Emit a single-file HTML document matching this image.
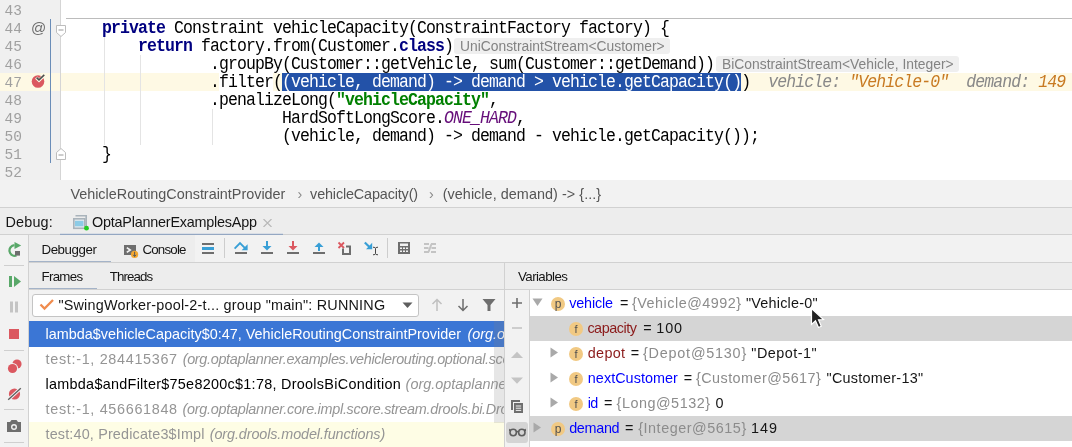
<!DOCTYPE html>
<html><head><meta charset="utf-8">
<style>
*{margin:0;padding:0;box-sizing:border-box}
html,body{width:1072px;height:447px;overflow:hidden;background:#f2f2f2}
body{position:relative;font-family:"Liberation Sans",sans-serif;color:#000;will-change:transform}
.a{position:absolute}
.mono{font-family:"Liberation Mono",monospace}
.code{position:absolute;left:66px;transform:translateY(1px) scaleY(1.1);transform-origin:0 13px;white-space:pre;font-family:"Liberation Mono",monospace;font-size:16.5px;letter-spacing:-0.9px;line-height:18px;height:18px;color:#000}
.kw{color:#000080;font-weight:bold}
.str{color:#008000;font-weight:bold}
.const{color:#660e7a;font-style:italic}
.ln{position:absolute;left:0;width:22px;text-align:right;font-family:"Liberation Mono",monospace;font-size:14.5px;line-height:18px;color:#a0a0a0}
.hint{position:absolute;height:16px;background:#efefef;border-radius:3px;color:#838383;font-size:13.85px;line-height:16px;padding-left:6px;white-space:pre}
.ui{position:absolute;white-space:pre;font-size:14px;line-height:18px}
.tab{position:absolute;white-space:pre;font-size:12.5px;line-height:16px;color:#1f1f1f}
.hl{position:absolute;height:1px;background:#d1d1d1}
.vl{position:absolute;width:1px;background:#d1d1d1}
</style></head><body>

<!-- ============ EDITOR ============ -->
<div class="a" style="left:0;top:0;width:1072px;height:180px;background:#fff"></div>
<div class="a" style="left:0;top:0;width:60px;height:180px;background:#f0f0f0"></div>
<!-- current line highlight -->
<div class="a" style="left:0;top:73px;width:1072px;height:18px;background:#fef9e4"></div>
<div class="a" style="left:219px;top:73px;width:54px;height:18px;background:#fff"></div>
<div class="a" style="left:282px;top:73px;width:459px;height:18px;background:#2352a8"></div>
<!-- gutter border -->
<div class="a" style="left:60px;top:0;width:1px;height:180px;background:#d5d5d5"></div>
<!-- vcs marker -->
<div class="a" style="left:50px;top:19px;width:1px;height:144px;background:#6a8db8"></div>
<!-- method separator -->
<div class="a" style="left:66px;top:18px;width:1006px;height:1px;background:#bcbcbc"></div>
<!-- indent guides -->
<div class="a" style="left:104px;top:37px;width:1px;height:108px;background:#e4e4e4"></div>
<div class="a" style="left:140px;top:55px;width:1px;height:90px;background:#e4e4e4"></div>
<div class="a" style="left:212px;top:109px;width:1px;height:36px;background:#e4e4e4"></div>

<!-- line numbers -->
<div class="ln" style="top:2px">43</div>
<div class="ln" style="top:20px">44</div>
<div class="ln" style="top:38px">45</div>
<div class="ln" style="top:56px">46</div>
<div class="ln" style="top:74px">47</div>
<div class="ln" style="top:92px">48</div>
<div class="ln" style="top:110px">49</div>
<div class="ln" style="top:128px">50</div>
<div class="ln" style="top:146px">51</div>
<div class="ln" style="top:164px">52</div>

<!-- @ icon -->
<div class="a" style="left:31px;top:19px;font-size:15px;line-height:18px;color:#6e6e6e;font-family:'Liberation Sans',sans-serif">@</div>
<!-- breakpoint -->
<svg class="a" style="left:30px;top:73px" width="16" height="18" viewBox="0 0 16 18">
  <circle cx="8" cy="8.5" r="6.3" fill="#db5860"/>
  <path d="M6.2 4.6 L9 7.3 L14.6 1.8" stroke="#fdf9e6" stroke-width="3.2" fill="none"/>
  <path d="M6.6 4.6 L9 6.9 L14.3 1.9" stroke="#4d4d4d" stroke-width="1.5" fill="none"/>
</svg>
<!-- fold markers -->
<svg class="a" style="left:55px;top:24px" width="12" height="14" viewBox="0 0 12 14">
  <path d="M1.5 1.5 H10.5 V8.5 L6 12.5 L1.5 8.5 Z" fill="#fff" stroke="#bdbdbd" stroke-width="1"/>
  <path d="M3.5 6 H8.5" stroke="#9a9a9a" stroke-width="1"/>
</svg>
<svg class="a" style="left:55px;top:147px" width="12" height="14" viewBox="0 0 12 14">
  <path d="M1.5 12.5 H10.5 V5.5 L6 1.5 L1.5 5.5 Z" fill="#fff" stroke="#bdbdbd" stroke-width="1"/>
  <path d="M3.5 8 H8.5" stroke="#9a9a9a" stroke-width="1"/>
</svg>

<!-- code -->
<div class="code" style="top:19px">    <span class="kw">private</span> Constraint vehicleCapacity(ConstraintFactory factory) {</div>
<div class="code" style="top:37px">        <span class="kw">return</span> factory.from(Customer.<span class="kw">class</span>)</div>
<div class="hint" style="left:454px;top:38px;width:216px">UniConstraintStream&lt;Customer&gt;</div>
<div class="code" style="top:55px">                .groupBy(Customer::getVehicle, sum(Customer::getDemand))</div>
<div class="hint" style="left:716px;top:56px;width:243px">BiConstraintStream&lt;Vehicle, Integer&gt;</div>
<div class="code" style="top:73px">                .filter(<span style="color:#fff">(vehicle, demand) -&gt; demand &gt; vehicle.getCapacity()</span>)  <i style="color:#888">vehicle: </i><i style="color:#c87a22">"Vehicle-0"</i><i style="color:#888">  demand: </i><i style="color:#c87a22">149</i></div>
<div class="code" style="top:91px">                .penalizeLong(<span class="str">"vehicleCapacity"</span>,</div>
<div class="code" style="top:109px">                        HardSoftLongScore.<span class="const">ONE_HARD</span>,</div>
<div class="code" style="top:127px">                        (vehicle, demand) -&gt; demand - vehicle.getCapacity());</div>
<div class="code" style="top:145px">    }</div>

<!-- ============ BREADCRUMBS ============ -->
<div class="a" style="left:0;top:180px;width:1072px;height:27px;background:#f2f2f2"></div>
<div class="hl" style="left:0;top:207px;width:1072px"></div>

<!-- ============ DEBUG BAR ============ -->
<div class="a" style="left:0;top:208px;width:1072px;height:26px;background:#ededed"></div>
<svg class="a" style="left:72px;top:214px" width="18" height="18" viewBox="0 0 18 18">
  <path d="M3.5 1.8 H14.2 V12" stroke="#a9b3bb" stroke-width="1.6" fill="none"/>
  <rect x="1.8" y="4.8" width="11" height="9.5" fill="#e6ebee" stroke="#a9b3bb" stroke-width="1.6"/>
  <rect x="3" y="6.8" width="8.5" height="5.5" fill="#8ccbe6"/>
  <circle cx="14.5" cy="14.2" r="2.4" fill="#22cc22"/>
</svg>
<svg class="a" style="left:263px;top:219px" width="9" height="8" viewBox="0 0 9 8"><path d="M0.5 0 L8.5 8 M8.5 0 L0.5 8" stroke="#b8b8b8" stroke-width="1.2"/></svg>
<div class="hl" style="left:0;top:234px;width:1072px"></div>
<div class="a" style="left:60px;top:234px;width:223px;height:1px;background:#94a7c2"></div>
<div class="a" style="left:60px;top:233px;width:223px;height:1px;background:#d9dee6"></div>

<!-- ============ LEFT TOOLBAR ============ -->
<div class="vl" style="left:28px;top:235px;height:212px"></div>
<div class="hl" style="left:4px;top:265px;width:20px;background:#cfcfcf"></div>
<div class="hl" style="left:4px;top:350px;width:20px;background:#cfcfcf"></div>
<div class="hl" style="left:4px;top:409px;width:20px;background:#cfcfcf"></div>
<div class="hl" style="left:4px;top:442px;width:20px;background:#cfcfcf"></div>
<!-- rerun -->
<svg class="a" style="left:6px;top:241px" width="17" height="17" viewBox="0 0 17 17">
  <path d="M8.5 4.2 A5.3 5.3 0 1 0 10.5 14.5" stroke="#59a869" stroke-width="2.2" fill="none"/>
  <path d="M8.5 1 L15.2 4.5 L8.5 8 Z" fill="#59a869"/>
  <rect x="9" y="10" width="5" height="4.6" fill="#6e6e6e"/>
</svg>
<!-- resume -->
<svg class="a" style="left:8px;top:275px" width="14" height="13" viewBox="0 0 14 13">
  <rect x="1" y="1" width="3" height="11" fill="#59a869"/>
  <path d="M6 1 L13 6.5 L6 12 Z" fill="#59a869"/>
</svg>
<!-- pause -->
<svg class="a" style="left:8px;top:301px" width="12" height="13" viewBox="0 0 12 13">
  <rect x="2" y="0.5" width="3" height="11" fill="#c4c4c4"/>
  <rect x="7" y="0.5" width="3" height="11" fill="#c4c4c4"/>
</svg>
<!-- stop -->
<div class="a" style="left:9px;top:329px;width:10px;height:10px;background:#db5860"></div>
<!-- view breakpoints -->
<svg class="a" style="left:6px;top:358px" width="17" height="17" viewBox="0 0 17 17">
  <circle cx="11" cy="6" r="4.6" fill="#db5860"/>
  <circle cx="6.5" cy="10.5" r="5.6" fill="#f2f2f2"/>
  <circle cx="6.5" cy="10.5" r="4.6" fill="#db5860"/>
</svg>
<!-- mute breakpoints -->
<svg class="a" style="left:6px;top:386px" width="17" height="16" viewBox="0 0 17 16">
  <circle cx="8.5" cy="8" r="5.6" fill="#db5860"/>
  <path d="M2 14 L15 2" stroke="#f2f2f2" stroke-width="3.2"/>
  <path d="M2.2 13.8 L14.8 2.2" stroke="#5e5e5e" stroke-width="1.3"/>
</svg>
<!-- camera -->
<svg class="a" style="left:6px;top:419px" width="16" height="14" viewBox="0 0 16 14">
  <path d="M1 3 H4 L5.5 1 H10.5 L12 3 H15 V13 H1 Z" fill="#6e6e6e"/>
  <circle cx="8" cy="8" r="3" fill="#f2f2f2"/>
  <circle cx="8" cy="8" r="1.6" fill="#6e6e6e"/>
</svg>

<!-- ============ DEBUGGER TABS ROW ============ -->
<div class="a" style="left:29px;top:235px;width:166px;height:27px;background:#ededed"></div>
<div class="a" style="left:29px;top:263px;width:1043px;height:26px;background:#ededed"></div>
<div class="a" style="left:29px;top:261px;width:82px;height:2px;background:#a4b3c8"></div>
<svg class="a" style="left:123px;top:242px" width="17" height="17" viewBox="0 0 17 17">
  <rect x="1" y="3" width="12" height="10" fill="#6e6e6e"/>
  <path d="M3.8 5.6 L7.2 8 L3.8 10.4" stroke="#f2f2f2" stroke-width="1.7" fill="none"/>
  <circle cx="11.6" cy="12.4" r="3.6" fill="#f4a831"/>
  <path d="M11.6 9.8 V14.4 M10.1 12.8 L11.6 14.5 L13.1 12.8" stroke="#5a5a5a" stroke-width="1" fill="none"/>
</svg>
<!-- show execution point -->
<svg class="a" style="left:202px;top:242px" width="13" height="13" viewBox="0 0 13 13">
  <rect x="0" y="1" width="12" height="2" fill="#6e6e6e"/>
  <rect x="0" y="5" width="12" height="3" fill="#389fd6"/>
  <rect x="0" y="10" width="12" height="2" fill="#6e6e6e"/>
</svg>
<div class="vl" style="left:224px;top:238px;height:20px;background:#cdcdcd"></div>
<!-- step over -->
<svg class="a" style="left:233px;top:240px" width="16" height="15" viewBox="0 0 16 15">
  <path d="M1.6 8.6 L7 3.2 L12 8.2" stroke="#389fd6" stroke-width="1.9" fill="none"/>
  <path d="M14.6 4.2 L14.6 10.2 L8.6 10.2 Z" fill="#389fd6"/>
  <rect x="2" y="12" width="12" height="2" fill="#6e6e6e"/>
</svg>
<!-- step into -->
<svg class="a" style="left:260px;top:240px" width="15" height="15" viewBox="0 0 15 15">
  <rect x="6" y="1" width="2" height="6" fill="#389fd6"/>
  <path d="M2.5 6 H11.5 L7 10.5 Z" fill="#389fd6"/>
  <rect x="1" y="12" width="12" height="2" fill="#6e6e6e"/>
</svg>
<!-- force step into -->
<svg class="a" style="left:286px;top:240px" width="15" height="15" viewBox="0 0 15 15">
  <rect x="6" y="1" width="2" height="6" fill="#db5860"/>
  <path d="M2.5 6 H11.5 L7 10.5 Z" fill="#db5860"/>
  <rect x="1" y="12" width="12" height="2" fill="#6e6e6e"/>
</svg>
<!-- step out -->
<svg class="a" style="left:312px;top:240px" width="15" height="15" viewBox="0 0 15 15">
  <path d="M2.5 7 H11.5 L7 2.5 Z" fill="#389fd6"/>
  <rect x="6" y="6" width="2" height="5" fill="#389fd6"/>
  <rect x="1" y="12" width="12" height="2" fill="#6e6e6e"/>
</svg>
<!-- drop frame -->
<svg class="a" style="left:337px;top:241px" width="16" height="15" viewBox="0 0 16 15">
  <path d="M1.5 1.5 L7 7 M7 1.5 L1.5 7" stroke="#db5860" stroke-width="1.8"/>
  <path d="M6 7.5 V13 H13 V5.5 H9" stroke="#6e6e6e" stroke-width="2" fill="none"/>
</svg>
<!-- run to cursor -->
<svg class="a" style="left:363px;top:241px" width="17" height="16" viewBox="0 0 17 16">
  <path d="M1.8 1.5 L7 6.5" stroke="#389fd6" stroke-width="2.2"/>
  <path d="M9.2 1.8 V8.2 H3 Z" fill="#389fd6"/>
  <path d="M10 6.2 Q12.5 6.2 12.5 7.4 Q12.5 6.2 15 6.2 M12.5 7.4 V12.6 M10 13.8 Q12.5 13.8 12.5 12.6 Q12.5 13.8 15 13.8" stroke="#444" stroke-width="1" fill="none"/>
</svg>
<div class="vl" style="left:387px;top:238px;height:20px;background:#cdcdcd"></div>
<!-- evaluate -->
<svg class="a" style="left:398px;top:242px" width="12" height="12" viewBox="0 0 12 12">
  <rect x="0" y="0" width="12" height="12" fill="#6e6e6e"/>
  <rect x="2" y="1.5" width="8" height="2.5" fill="#f2f2f2"/>
  <rect x="2" y="5.5" width="2" height="1.5" fill="#f2f2f2"/><rect x="5" y="5.5" width="2" height="1.5" fill="#f2f2f2"/><rect x="8" y="5.5" width="2" height="1.5" fill="#f2f2f2"/>
  <rect x="2" y="8.5" width="2" height="1.5" fill="#f2f2f2"/><rect x="5" y="8.5" width="2" height="1.5" fill="#f2f2f2"/><rect x="8" y="8.5" width="2" height="1.5" fill="#f2f2f2"/>
</svg>
<!-- trace -->
<svg class="a" style="left:424px;top:242px" width="13" height="12" viewBox="0 0 13 12">
  <path d="M0 2 H5 M0 6 H4.5 M0 10 H5 M7 2 H12 M7.5 6 H12 M7 10 H12 M4.5 10 L7.5 2" stroke="#c4c4c4" stroke-width="2" fill="none"/>
</svg>
<div class="hl" style="left:29px;top:262px;width:1043px"></div>

<!-- ============ FRAMES / THREADS HEADER ============ -->
<div class="a" style="left:29px;top:288px;width:68px;height:2px;background:#a4b3c8"></div>
<div class="hl" style="left:29px;top:289px;width:1043px"></div>
<div class="vl" style="left:504px;top:263px;height:184px"></div>

<!-- thread combo -->
<div class="a" style="left:32px;top:294px;width:387px;height:23px;background:#fff;border:1px solid #c4c4c4;border-radius:3px"></div>
<svg class="a" style="left:39px;top:298px" width="16" height="13" viewBox="0 0 16 13">
  <path d="M1.5 6.5 L5.5 10.5 L14 2" stroke="#f08c4e" stroke-width="2.3" fill="none"/>
</svg>
<svg class="a" style="left:402px;top:302px" width="11" height="7" viewBox="0 0 11 7"><path d="M0.5 0.5 H10.5 L5.5 6 Z" fill="#5e5e5e"/></svg>
<!-- up/down/filter -->
<svg class="a" style="left:431px;top:298px" width="12" height="14" viewBox="0 0 12 14">
  <path d="M6 13 V2 M1.5 6 L6 1.5 L10.5 6" stroke="#c0c0c0" stroke-width="1.5" fill="none"/>
</svg>
<svg class="a" style="left:457px;top:298px" width="12" height="14" viewBox="0 0 12 14">
  <path d="M6 1 V12 M1.5 8 L6 12.5 L10.5 8" stroke="#6e6e6e" stroke-width="1.5" fill="none"/>
</svg>
<svg class="a" style="left:482px;top:298px" width="14" height="14" viewBox="0 0 14 14">
  <path d="M0.5 1 H13.5 L8.5 7 V13 H5.5 V7 Z" fill="#6e6e6e"/>
</svg>

<!-- ============ FRAMES LIST ============ -->
<div class="a" style="left:29px;top:321px;width:475px;height:126px;background:#fff"></div>
<div class="a" style="left:29px;top:321px;width:475px;height:26px;background:#3b76d5"></div>
<div class="a" style="left:29px;top:422px;width:475px;height:25px;background:#fefde5"></div>
<!-- scrollbar -->
<div class="a" style="left:494px;top:321px;width:10px;height:102px;background:rgba(128,128,128,0.2);z-index:5"></div>

<!-- ============ VARIABLES ============ -->
<div class="a" style="left:505px;top:290px;width:24px;height:157px;background:#f2f2f2"></div>
<div class="vl" style="left:529px;top:290px;height:157px"></div>
<div class="a" style="left:530px;top:290px;width:542px;height:157px;background:#fff"></div>
<div class="a" style="left:530px;top:316px;width:542px;height:25px;background:#d5d5d5"></div>
<div class="a" style="left:530px;top:416px;width:542px;height:25px;background:#d5d5d5"></div>
<!-- mini toolbar -->
<svg class="a" style="left:512px;top:298px" width="10" height="10" viewBox="0 0 10 10"><path d="M5 0 V10 M0 5 H10" stroke="#6e6e6e" stroke-width="1.6"/></svg>
<svg class="a" style="left:512px;top:323px" width="10" height="10" viewBox="0 0 10 10"><path d="M0 5 H10" stroke="#c4c4c4" stroke-width="1.6"/></svg>
<svg class="a" style="left:510px;top:350px" width="14" height="10" viewBox="0 0 14 10"><path d="M1 8 H13 L7 1.8 Z" fill="#c4c4c4"/></svg>
<svg class="a" style="left:510px;top:376px" width="14" height="10" viewBox="0 0 14 10"><path d="M1 1.6 H13 L7 7.8 Z" fill="#c4c4c4"/></svg>
<svg class="a" style="left:510px;top:399px" width="14" height="15" viewBox="0 0 14 15">
  <path d="M1 1 H10 V3 H3 V11 H1 Z" fill="#6e6e6e"/>
  <rect x="4" y="4" width="9" height="10" fill="#6e6e6e"/>
  <path d="M5.8 7 H11.2 M5.8 9.2 H11.2 M5.8 11.4 H11.2" stroke="#f2f2f2" stroke-width="1"/>
</svg>
<div class="a" style="left:506px;top:422px;width:22px;height:21px;background:#d4d4d4;border-radius:3px"></div>
<svg class="a" style="left:509px;top:427px" width="17" height="10" viewBox="0 0 17 10">
  <circle cx="4.2" cy="5.5" r="3.2" fill="none" stroke="#5e5e5e" stroke-width="1.6"/>
  <circle cx="12.8" cy="5.5" r="3.2" fill="none" stroke="#5e5e5e" stroke-width="1.6"/>
  <path d="M7.5 5 Q8.5 4 9.5 5 M0.5 4 L1 2 M16.5 4 L16 2" stroke="#5e5e5e" stroke-width="1.4" fill="none"/>
</svg>

<!-- tree rows -->
<svg class="a" style="left:532px;top:298px" width="11" height="9" viewBox="0 0 11 9"><path d="M0.5 0.5 H10.5 L5.5 8 Z" fill="#a9a9a9"/></svg>
<div class="a" style="left:551px;top:297px;width:14px;height:14px;border-radius:7px;background:#f1c983"></div>
<div class="ui" style="left:551px;top:295px;width:14px;text-align:center;font-size:12px;color:#505050">p</div>

<div class="a" style="left:569px;top:322px;width:14px;height:14px;border-radius:7px;background:#f1c983"></div>
<div class="ui" style="left:569px;top:320px;width:14px;text-align:center;font-size:11px;color:#505050">f</div>

<svg class="a" style="left:550px;top:347px" width="9" height="11" viewBox="0 0 9 11"><path d="M0.5 0.5 V10.5 L8 5.5 Z" fill="#a9a9a9"/></svg>
<div class="a" style="left:569px;top:347px;width:14px;height:14px;border-radius:7px;background:#f1c983"></div>
<div class="ui" style="left:569px;top:345px;width:14px;text-align:center;font-size:11px;color:#505050">f</div>

<svg class="a" style="left:550px;top:372px" width="9" height="11" viewBox="0 0 9 11"><path d="M0.5 0.5 V10.5 L8 5.5 Z" fill="#a9a9a9"/></svg>
<div class="a" style="left:569px;top:372px;width:14px;height:14px;border-radius:7px;background:#f1c983"></div>
<div class="ui" style="left:569px;top:370px;width:14px;text-align:center;font-size:11px;color:#505050">f</div>

<svg class="a" style="left:550px;top:397px" width="9" height="11" viewBox="0 0 9 11"><path d="M0.5 0.5 V10.5 L8 5.5 Z" fill="#a9a9a9"/></svg>
<div class="a" style="left:569px;top:397px;width:14px;height:14px;border-radius:7px;background:#f1c983"></div>
<div class="ui" style="left:569px;top:395px;width:14px;text-align:center;font-size:11px;color:#505050">f</div>

<svg class="a" style="left:533px;top:422px" width="9" height="11" viewBox="0 0 9 11"><path d="M0.5 0.5 V10.5 L8 5.5 Z" fill="#a9a9a9"/></svg>
<div class="a" style="left:551px;top:422px;width:14px;height:14px;border-radius:7px;background:#f1c983"></div>
<div class="ui" style="left:551px;top:420px;width:14px;text-align:center;font-size:12px;color:#505050">p</div>

<!-- mouse cursor -->
<svg class="a" style="left:810px;top:307px;z-index:6" width="18" height="23" viewBox="0 0 18 23">
  <path d="M1.5 1.5 V17.5 L5.5 13.8 L8.5 20.5 L11.3 19.3 L8.5 12.8 L13.5 12.5 Z" fill="#222" stroke="#fff" stroke-width="1.2"/>
</svg>

<style>.sg{position:absolute;white-space:pre;line-height:18px;font-family:"Liberation Sans",sans-serif}</style>
<div id="b1" class="sg" style="left:70.40px;top:185.24px;font-size:14.4px;letter-spacing:-0.006px;color:#555">VehicleRoutingConstraintProvider</div>
<div id="b1s" class="sg" style="left:297.40px;top:185.24px;font-size:14.4px;letter-spacing:0.000px;color:#8a8a8a">›</div>
<div id="b2" class="sg" style="left:310.10px;top:185.24px;font-size:14.4px;letter-spacing:-0.148px;color:#555">vehicleCapacity()</div>
<div id="b2s" class="sg" style="left:429.00px;top:185.24px;font-size:14.4px;letter-spacing:0.000px;color:#8a8a8a">›</div>
<div id="b3" class="sg" style="left:442.70px;top:185.24px;font-size:14.4px;letter-spacing:0.049px;color:#555">(vehicle, demand) -&gt; {...}</div>
<div id="d1" class="sg" style="left:5.50px;top:213.24px;font-size:14.4px;letter-spacing:0.179px;color:#151515">Debug:</div>
<div id="d2" class="sg" style="left:92.00px;top:213.24px;font-size:14.4px;letter-spacing:-0.218px;color:#151515">OptaPlannerExamplesApp</div>
<div id="t1" class="sg" style="left:41.50px;top:241.20px;font-size:13.3px;letter-spacing:-0.439px;color:#151515">Debugger</div>
<div id="t2" class="sg" style="left:142.40px;top:240.60px;font-size:13.3px;letter-spacing:-0.782px;color:#151515">Console</div>
<div id="t3" class="sg" style="left:41.50px;top:267.60px;font-size:13.3px;letter-spacing:-0.703px;color:#151515">Frames</div>
<div id="t4" class="sg" style="left:109.70px;top:267.60px;font-size:13.3px;letter-spacing:-0.905px;color:#151515">Threads</div>
<div id="t5" class="sg" style="left:518.00px;top:267.60px;font-size:13.3px;letter-spacing:-0.575px;color:#151515">Variables</div>
<div id="c1" class="sg" style="left:58.40px;top:296.24px;font-size:14.4px;letter-spacing:0.208px;color:#151515">&quot;SwingWorker-pool-2-t... group &quot;main&quot;: RUNNING</div>
<div id="v1a" class="sg" style="left:569.20px;top:293.74px;font-size:14.4px;letter-spacing:-0.149px;color:#0000ff">vehicle</div>
<div id="v1b" class="sg" style="left:620.00px;top:293.74px;font-size:14.4px;letter-spacing:0.000px;color:#151515">=</div>
<div id="v1c" class="sg" style="left:632.00px;top:293.74px;font-size:14.4px;letter-spacing:0.498px;color:#8c8c8c">{Vehicle@4992}</div>
<div id="v1d" class="sg" style="left:746.00px;top:293.74px;font-size:14.4px;letter-spacing:0.209px;color:#151515">&quot;Vehicle-0&quot;</div>
<div id="v2a" class="sg" style="left:587.40px;top:318.74px;font-size:14.4px;letter-spacing:-0.471px;color:#8b1a1a">capacity</div>
<div id="v2b" class="sg" style="left:643.30px;top:318.74px;font-size:14.4px;letter-spacing:0.000px;color:#151515">=</div>
<div id="v2c" class="sg" style="left:656.30px;top:318.74px;font-size:14.4px;letter-spacing:0.847px;color:#151515">100</div>
<div id="v3a" class="sg" style="left:587.80px;top:343.74px;font-size:14.4px;letter-spacing:0.322px;color:#8b1a1a">depot</div>
<div id="v3b" class="sg" style="left:630.70px;top:343.74px;font-size:14.4px;letter-spacing:0.000px;color:#151515">=</div>
<div id="v3c" class="sg" style="left:643.00px;top:343.74px;font-size:14.4px;letter-spacing:0.779px;color:#8c8c8c">{Depot@5130}</div>
<div id="v3d" class="sg" style="left:751.30px;top:343.74px;font-size:14.4px;letter-spacing:0.499px;color:#151515">&quot;Depot-1&quot;</div>
<div id="v4a" class="sg" style="left:587.80px;top:368.74px;font-size:14.4px;letter-spacing:0.047px;color:#0000ff">nextCustomer</div>
<div id="v4b" class="sg" style="left:683.70px;top:368.74px;font-size:14.4px;letter-spacing:0.000px;color:#151515">=</div>
<div id="v4c" class="sg" style="left:696.00px;top:368.74px;font-size:14.4px;letter-spacing:0.443px;color:#8c8c8c">{Customer@5617}</div>
<div id="v4d" class="sg" style="left:826.60px;top:368.74px;font-size:14.4px;letter-spacing:0.251px;color:#151515">&quot;Customer-13&quot;</div>
<div id="v5a" class="sg" style="left:587.80px;top:393.74px;font-size:14.4px;letter-spacing:-0.697px;color:#0000ff">id</div>
<div id="v5b" class="sg" style="left:604.00px;top:393.74px;font-size:14.4px;letter-spacing:0.000px;color:#151515">=</div>
<div id="v5c" class="sg" style="left:616.60px;top:393.74px;font-size:14.4px;letter-spacing:0.516px;color:#8c8c8c">{Long@5132}</div>
<div id="v5d" class="sg" style="left:715.40px;top:393.74px;font-size:14.4px;letter-spacing:0.000px;color:#151515">0</div>
<div id="v6a" class="sg" style="left:569.20px;top:418.74px;font-size:14.4px;letter-spacing:-0.320px;color:#0000ff">demand</div>
<div id="v6b" class="sg" style="left:625.00px;top:418.74px;font-size:14.4px;letter-spacing:0.000px;color:#151515">=</div>
<div id="v6c" class="sg" style="left:638.20px;top:418.74px;font-size:14.4px;letter-spacing:0.536px;color:#8c8c8c">{Integer@5615}</div>
<div id="v6d" class="sg" style="left:751.00px;top:418.74px;font-size:14.4px;letter-spacing:0.997px;color:#151515">149</div>
<div class="a" style="left:29px;top:321px;width:475px;height:126px;overflow:hidden">
<div id="f1a" class="sg" style="left:16.50px;top:4.24px;font-size:14.4px;letter-spacing:0.007px;color:#fff">lambda$vehicleCapacity$0:47, VehicleRoutingConstraintProvider</div>
<div id="f1b" class="sg" style="left:438.50px;top:4.24px;font-size:14.4px;letter-spacing:0.000px;color:#fff;font-style:italic">(org.optaplanner</div>
<div id="f2a" class="sg" style="left:16.60px;top:29.24px;font-size:14.4px;letter-spacing:0.676px;color:#959595">test:-1, 284415367</div>
<div id="f2b" class="sg" style="left:153.70px;top:29.24px;font-size:14.4px;letter-spacing:-0.316px;color:#959595;font-style:italic">(org.optaplanner.examples.vehiclerouting.optional.score</div>
<div id="f3a" class="sg" style="left:16.50px;top:54.24px;font-size:14.4px;letter-spacing:0.285px;color:#000">lambda$andFilter$75e8200c$1:78, DroolsBiCondition</div>
<div id="f3b" class="sg" style="left:376.60px;top:54.24px;font-size:14.4px;letter-spacing:0.000px;color:#959595;font-style:italic">(org.optaplanner</div>
<div id="f4a" class="sg" style="left:16.60px;top:79.24px;font-size:14.4px;letter-spacing:0.676px;color:#959595">test:-1, 456661848</div>
<div id="f4b" class="sg" style="left:153.60px;top:79.24px;font-size:14.4px;letter-spacing:-0.275px;color:#959595;font-style:italic">(org.optaplanner.core.impl.score.stream.drools.bi.DroolsBi</div>
<div id="f5a" class="sg" style="left:16.50px;top:104.24px;font-size:14.4px;letter-spacing:0.161px;color:#959595">test:40, Predicate3$Impl</div>
<div id="f5b" class="sg" style="left:180.80px;top:104.24px;font-size:14.4px;letter-spacing:-0.110px;color:#959595;font-style:italic">(org.drools.model.functions)</div>
</div>
</body></html>
